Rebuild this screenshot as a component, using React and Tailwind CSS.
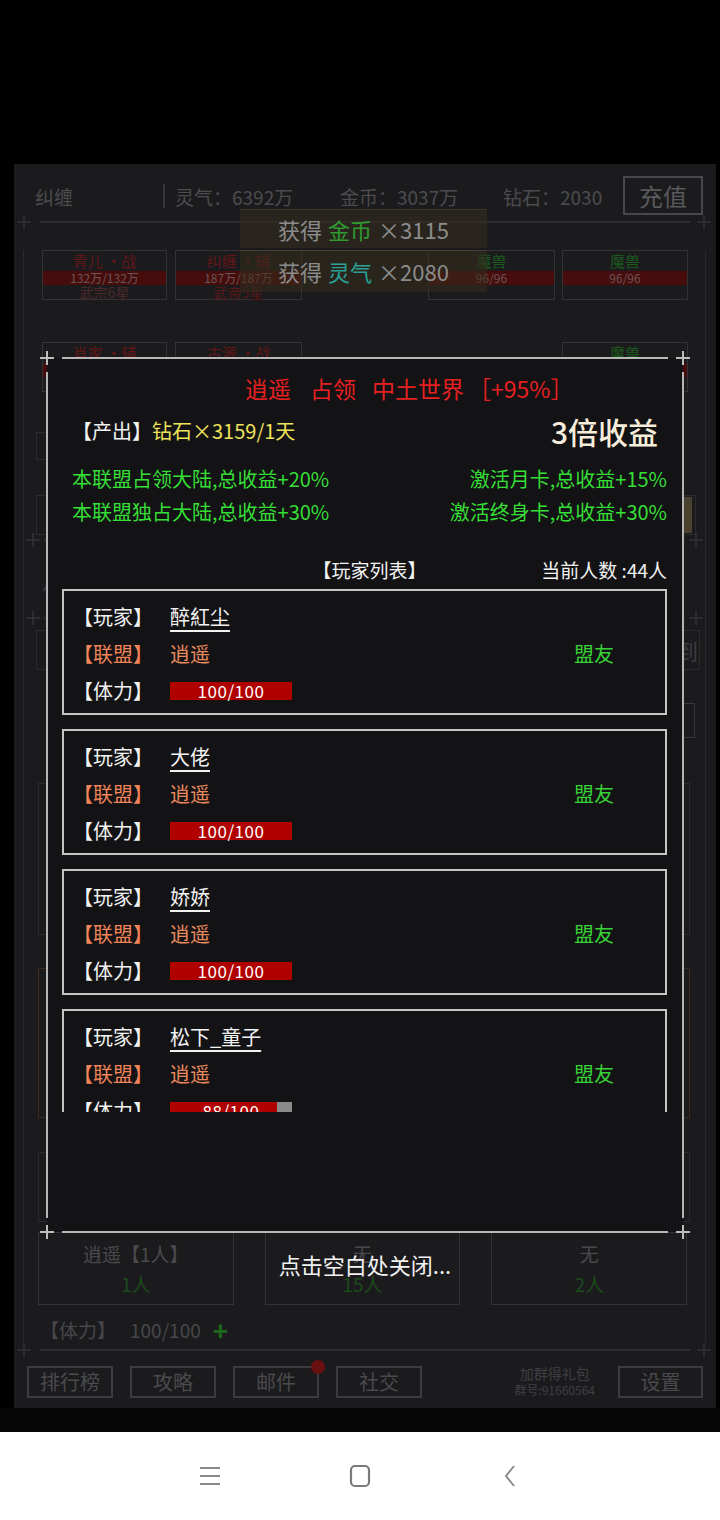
import React from "react";

function Cross({ color = "#bdbdbd", w = 2 }) {
  return (
    <svg width="14" height="14" viewBox="0 0 14 14" className="block shrink-0">
      <path d="M0 7H14M7 0V14" stroke={color} strokeWidth={w} />
    </svg>
  );
}

function FrameRow({ color, w, lineClass, rowClass }) {
  return (
    <div className={rowClass}>
      <Cross color={color} w={w} />
      <div className={lineClass} />
      <Cross color={color} w={w} />
    </div>
  );
}

function BgCard({ w, title, titleColor, bar, sub, subColor }) {
  return (
    <div className={`${w} h-[50px] border border-[#333336] flex flex-col items-center`}>
      <div className={`h-[20px] leading-[20px] text-[15px] ${titleColor}`}>{title}</div>
      {bar ? (
        <div className="w-full h-[14px] bg-[#470d0d] text-[12px] leading-[14px] text-center text-[#6a5656]">{bar}</div>
      ) : null}
      <div className={`h-[14px] text-[14px] leading-[14px] ${subColor}`}>{sub}</div>
    </div>
  );
}

const players = [
  { name: "醉紅尘", hp: 100 },
  { name: "大佬", hp: 100 },
  { name: "娇娇", hp: 100 },
  { name: "松下_童子", hp: 88 },
];

function PlayerCard({ p }) {
  return (
    <div className="h-[126px] shrink-0 border-2 border-[#c4c4c4] pl-[9px] pt-[7px] text-[20px]">
      <div className="flex items-center h-[37px]">
        <span className="w-[80px] text-[#f2f2f2]">【玩家】</span>
        <span className="ml-[17px] text-[#f2f2f2] underline decoration-[1.5px] underline-offset-[5px]">{p.name}</span>
      </div>
      <div className="flex items-center h-[37px]">
        <span className="w-[80px] text-[#f0845a]">【联盟】</span>
        <span className="ml-[17px] text-[#e88a5c]">逍遥</span>
        <span className="ml-auto mr-[51px] text-[#38d238]">盟友</span>
      </div>
      <div className="flex items-center h-[37px]">
        <span className="w-[80px] text-[#f2f2f2]">【体力】</span>
        <div className="ml-[17px] relative w-[122px] h-[18px] bg-[#8a8a8a]">
          <div className="h-full bg-[#b00000]" style={{ width: `${p.hp}%` }} />
          <div className="absolute inset-0 flex items-center justify-center text-[17px] leading-[18px] text-white tracking-[0.5px]">
            {p.hp}/100
          </div>
        </div>
      </div>
    </div>
  );
}

export default function App() {
  return (
    <div className="w-[720px] h-[1520px] bg-black flex flex-col overflow-hidden font-['Noto_Sans_CJK_SC','Noto_Sans',sans-serif]">
      <div className="h-[164px] shrink-0 bg-black" />

      {/* game area */}
      <div className="relative h-[1244px] shrink-0 ml-[14px] w-[702px] bg-[#1b1b1e]">
        {/* header */}
        <div className="flex h-[39px] mt-[12px] pl-[21px] text-[19px] text-[#4c4c4e]">
          <span className="w-[128px] mt-[7px]">纠缠</span>
          <div className="w-[2px] h-[24px] mt-[8px] bg-[#37373a]" />
          <span className="ml-[10px] w-[165px] mt-[7px]">灵气：6392万</span>
          <span className="w-[163px] mt-[7px]">金币：3037万</span>
          <span className="w-[120px] mt-[7px]">钻石：2030</span>
          <div className="w-[80px] h-[39px] border-2 border-[#48484a] flex items-center justify-center text-[24px] text-[#59595b]">
            充值
          </div>
        </div>

        <FrameRow
          color="#333336"
          w={1.5}
          rowClass="flex items-center h-[14px] ml-[3px] w-[694px]"
          lineClass="flex-1 h-[1.5px] ml-[9px] mr-[7px] bg-[#2e2e31]"
        />

        {/* main wrapper */}
        <div className="ml-[9px] w-[683px] border-x border-[#2a2a2d]">
          <div className="flex justify-between pl-[18px] pr-[17px] mt-[21px]">
            <div className="flex gap-[8px]">
              <BgCard w="w-[125px]" title="青儿 ·战" titleColor="text-[#621717]" bar="132万/132万" sub="武宗6星" subColor="text-[#4d2a2a]" />
              <BgCard w="w-[127px]" title="纠缠 ·辅" titleColor="text-[#621717]" bar="187万/187万" sub="武帝5星" subColor="text-[#5a1717]" />
            </div>
            <div className="flex gap-[7px]">
              <BgCard w="w-[127px]" title="魔兽" titleColor="text-[#1d5a1d]" bar="96/96" sub="" subColor="text-[#333]" />
              <BgCard w="w-[126px]" title="魔兽" titleColor="text-[#1d5a1d]" bar="96/96" sub="" subColor="text-[#333]" />
            </div>
          </div>
          <div className="flex justify-between pl-[18px] pr-[17px] mt-[42px]">
            <div className="flex gap-[8px]">
              <BgCard w="w-[125px]" title="肖家 ·辅" titleColor="text-[#621717]" bar="96万/96万" sub="武宗3星" subColor="text-[#4d2a2a]" />
              <BgCard w="w-[127px]" title="古源 ·战" titleColor="text-[#621717]" bar="88万/88万" sub="武宗2星" subColor="text-[#4d2a2a]" />
            </div>
            <div className="flex gap-[7px]">
              <BgCard w="w-[126px]" title="魔兽" titleColor="text-[#1d5a1d]" bar="96/96" sub="" subColor="text-[#333]" />
            </div>
          </div>

          {/* hidden middle */}
          <div className="h-[840px] flex flex-col overflow-hidden">
            <div className="mt-[40px] ml-[12px] w-[250px] h-[28px] shrink-0 border border-[#2b2b2e]" />
            <div className="mt-[35px] ml-[12px] w-[660px] h-[40px] shrink-0 border border-[#2b2b2e] flex justify-end pr-[3px] py-[1px]">
              <div className="w-[9px] h-full bg-[#4a412f]" />
            </div>
            <FrameRow
              color="#333336"
              w={1.5}
              rowClass="flex items-center h-[14px] -mt-[2px] mx-[2px] shrink-0"
              lineClass="flex-1 h-[1.5px] mx-[4px] bg-[#2a2a2d]"
            />
            <div className="mt-[28px] ml-[18px] h-[30px] leading-[30px] text-[28px] text-[#333336] shrink-0">修炼</div>
            <FrameRow
              color="#333336"
              w={1.5}
              rowClass="flex items-center h-[14px] mt-[6px] mx-[2px] shrink-0"
              lineClass="flex-1 h-[1.5px] mx-[4px] bg-[#2a2a2d]"
            />
            <div className="mt-[5px] ml-[12px] w-[664px] h-[40px] shrink-0 border border-[#2b2b2e] flex items-center justify-end pr-[1px] text-[22px] text-[#3c3c3f]">
              签到
            </div>
            <div className="mt-[33px] ml-[626px] w-[45px] h-[35px] shrink-0 border border-[#38383b]" />
            <div className="mt-[45px] ml-[14px] w-[652px] h-[152px] shrink-0 border border-[#2b2b2e]" />
            <div className="mt-[33px] ml-[14px] w-[652px] h-[150px] shrink-0 border border-[#3a2a22]" />
            <div className="mt-[34px] ml-[14px] w-[652px] h-[70px] shrink-0 border border-[#2b2b2e]" />
          </div>

          {/* bottom boxes */}
          <div className="grid grid-cols-3 gap-[31px] pl-[14px] pr-[18px]">
            <div className="h-[73px] border border-[#333336] flex flex-col items-center pt-[6px]">
              <span className="text-[19px] leading-[30px] text-[#4a4a4c]">逍遥【1人】</span>
              <span className="text-[19px] leading-[30px] text-[#1d4a1d]">1人</span>
            </div>
            <div className="h-[73px] border border-[#333336] flex flex-col items-center pt-[6px]">
              <span className="text-[19px] leading-[30px] text-[#4a4a4c]">无</span>
              <span className="text-[19px] leading-[30px] text-[#1d4a1d]">15人</span>
            </div>
            <div className="h-[73px] border border-[#333336] flex flex-col items-center pt-[6px]">
              <span className="text-[19px] leading-[30px] text-[#4a4a4c]">无</span>
              <span className="text-[19px] leading-[30px] text-[#1d4a1d]">2人</span>
            </div>
          </div>

          <div className="flex items-center h-[26px] mt-[12px] pl-[16px] text-[19px] text-[#474749]">
            <span>【体力】</span>
            <span className="ml-[14px]">100/100</span>
            <span className="ml-[12px] text-[26px] leading-[26px] font-bold text-[#1c6a1c]">+</span>
          </div>
        </div>

        <FrameRow
          color="#333336"
          w={1.5}
          rowClass="flex items-center h-[14px] ml-[3px] w-[694px]"
          lineClass="flex-1 h-[1.5px] ml-[9px] mr-[7px] bg-[#2e2e31]"
        />

        {/* bottom buttons */}
        <div className="flex items-center mt-[8px] pl-[13px] text-[20px] text-[#4a4a4c]">
          <div className="flex gap-[17px]">
            <div className="w-[86px] h-[32px] border-2 border-[#3c3c3f] flex items-center justify-center">排行榜</div>
            <div className="w-[86px] h-[32px] border-2 border-[#3c3c3f] flex items-center justify-center">攻略</div>
            <div className="relative w-[86px] h-[32px] border-2 border-[#3c3c3f] flex items-center justify-center">
              邮件
              <div className="absolute -top-[8px] -right-[8px] w-[14px] h-[14px] rounded-full bg-[#6b1010]" />
            </div>
            <div className="w-[86px] h-[32px] border-2 border-[#3c3c3f] flex items-center justify-center">社交</div>
          </div>
          <div className="ml-auto flex flex-col items-center text-[#3f3f42]">
            <span className="text-[14px] leading-[17px]">加群得礼包</span>
            <span className="text-[12px] leading-[16px]">群号:91660564</span>
          </div>
          <div className="ml-[23px] mr-[13px] w-[85px] h-[32px] border-2 border-[#3c3c3f] flex items-center justify-center">设置</div>
        </div>

        {/* toasts */}
        <div className="absolute left-[226px] top-[45px] w-[247px] h-[39px] bg-[rgba(52,45,30,0.6)] border-t border-[#3a362c] flex items-center justify-center text-[22px] text-[#8c8c8c]">
          <span>获得</span>
          <span className="ml-[6px] text-[#2f9a2f]">金币</span>
          <span className="ml-[6px]">×3115</span>
        </div>
        <div className="absolute left-[226px] top-[86px] w-[247px] h-[42px] bg-[rgba(52,45,30,0.55)] border-t border-[#433e36] flex items-center justify-center text-[22px] text-[#8c8c8c]">
          <span>获得</span>
          <span className="ml-[6px] text-[#2aa097]">灵气</span>
          <span className="ml-[6px]">×2080</span>
        </div>

        {/* modal */}
        <div className="absolute left-[26px] top-[187px] w-[650px] h-[888px]">
          <div className="absolute inset-[7px] bg-[#131215]" />
          <div className="relative flex flex-col h-full">
            <FrameRow
              color="#bdbdbd"
              w={2}
              rowClass="flex items-center h-[14px] shrink-0"
              lineClass="flex-1 h-[2px] mx-[8px] bg-[#b8b8b8]"
            />
            <div className="flex flex-1">
              <div className="w-[14px] flex justify-center py-[7px]">
                <div className="w-[2px] h-full bg-[#b5b5b5]" />
              </div>
              <div className="flex-1 flex flex-col pl-[8px] pr-[9px]">
                <div className="mt-[8px] h-[30px] flex items-center text-[23px] text-[#e52020] ml-[183px]">
                  <span>逍遥</span>
                  <span className="ml-[19px]">占领</span>
                  <span className="ml-[16px]">中土世界</span>
                  <span className="ml-[4px]">［+95%］</span>
                </div>
                <div className="mt-[8px] h-[40px] flex items-center pl-[10px]">
                  <span className="text-[20px] text-[#f2f2f2]">【产出】</span>
                  <span className="text-[20px] text-[#eee35a]">钻石×3159/1天</span>
                  <span className="ml-auto mr-[9px] text-[30px] font-medium text-[#f6eedb]">3倍收益</span>
                </div>
                <div className="mt-[11px] h-[33px] flex items-center justify-between pl-[10px] text-[20px] text-[#36df36]">
                  <span>本联盟占领大陆,总收益+20%</span>
                  <span>激活月卡,总收益+15%</span>
                </div>
                <div className="h-[33px] flex items-center justify-between pl-[10px] text-[20px] text-[#36df36]">
                  <span>本联盟独占大陆,总收益+30%</span>
                  <span>激活终身卡,总收益+30%</span>
                </div>
                <div className="mt-[28px] h-[28px] grid grid-cols-[1fr_auto_1fr] items-center pl-[10px] text-[19px] text-[#f2f2f2]">
                  <span />
                  <span>【玩家列表】</span>
                  <span className="text-right">当前人数 :44人</span>
                </div>
                <div className="mt-[5px] h-[523px] overflow-hidden flex flex-col gap-[14px]">
                  {players.map((p) => (
                    <PlayerCard key={p.name} p={p} />
                  ))}
                </div>
              </div>
              <div className="w-[14px] flex justify-center py-[7px]">
                <div className="w-[2px] h-full bg-[#b5b5b5]" />
              </div>
            </div>
            <FrameRow
              color="#bdbdbd"
              w={2}
              rowClass="flex items-center h-[14px] shrink-0"
              lineClass="flex-1 h-[2px] mx-[8px] bg-[#b8b8b8]"
            />
          </div>
        </div>

        {/* close hint */}
        <div className="absolute left-0 right-0 top-[1085px] h-[30px] flex items-center justify-center text-[22px] text-[#f2f2f2]">
          点击空白处关闭...
        </div>
      </div>

      <div className="h-[24px] shrink-0 bg-[#060607]" />

      {/* android nav bar */}
      <div className="h-[88px] shrink-0 bg-white flex items-center justify-center gap-[110px]">
        <div className="w-[40px] flex justify-center">
          <svg width="22" height="20" viewBox="0 0 22 20">
            <path d="M1 2H21M1 10H21M1 18H21" stroke="#8a8a8a" strokeWidth="2" />
          </svg>
        </div>
        <div className="w-[40px] flex justify-center">
          <svg width="22" height="24" viewBox="0 0 22 24">
            <rect x="2" y="2" width="18" height="20" rx="4" fill="none" stroke="#7a7a7a" strokeWidth="2.2" />
          </svg>
        </div>
        <div className="w-[40px] flex justify-center">
          <svg width="14" height="24" viewBox="0 0 14 24">
            <path d="M11 2L3 12L11 22" fill="none" stroke="#8a8a8a" strokeWidth="2" />
          </svg>
        </div>
      </div>
    </div>
  );
}
